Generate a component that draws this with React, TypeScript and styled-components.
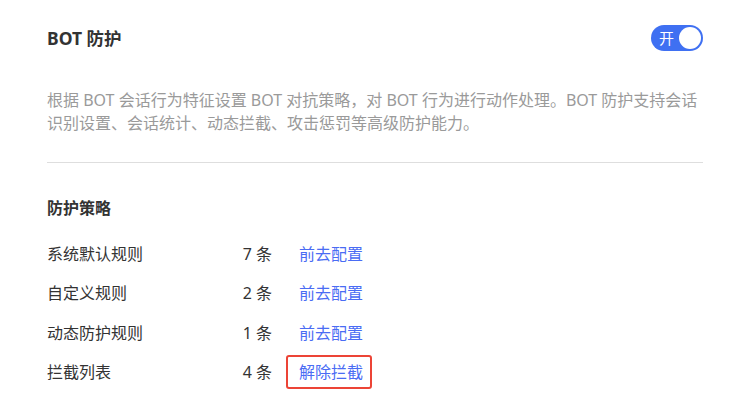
import React from "react";
import styled, { createGlobalStyle } from "styled-components";

const Global = createGlobalStyle`
  html, body { margin: 0; padding: 0; background: #ffffff; }
  body {
    font-family: "Noto Sans", "Noto Sans CJK SC", sans-serif;
    color: #333333;
  }
`;

const Page = styled.div`
  width: 749px;
  box-sizing: border-box;
  padding: 25px 46px 0 47px;
`;

const Header = styled.div`
  display: flex;
  align-items: center;
  justify-content: space-between;
  height: 26px;
`;

const Title = styled.h2`
  margin: 0;
  font-size: 17.5px;
  font-weight: 700;
  line-height: 24px;
  color: #333333;
`;

const Switch = styled.button`
  position: relative;
  display: flex;
  align-items: center;
  justify-content: space-between;
  width: 52px;
  height: 26px;
  padding: 0 2px 0 8px;
  box-sizing: border-box;
  border: none;
  border-radius: 13px;
  background: #3f70f2;
  cursor: pointer;
`;

const SwitchLabel = styled.span`
  font-family: "Noto Sans CJK SC", sans-serif;
  font-size: 15px;
  line-height: 26px;
  color: #ffffff;
`;

const Knob = styled.span`
  width: 22px;
  height: 22px;
  border-radius: 50%;
  background: #ffffff;
`;

const Description = styled.p`
  margin: 38px 0 0;
  font-size: 16px;
  line-height: 23px;
  color: #9a9a9a;
`;

const Divider = styled.hr`
  margin: 27px 0 0;
  border: none;
  height: 1px;
  background: #dedede;
`;

const SectionTitle = styled.h3`
  margin: 33px 0 0;
  font-size: 16px;
  font-weight: 700;
  line-height: 24px;
  color: #333333;
`;

const List = styled.div`
  margin-top: 14.5px;
  display: flex;
  flex-direction: column;
`;

const Row = styled.div`
  display: flex;
  align-items: center;
  height: 39.3px;
  font-size: 16px;
  line-height: 24px;
`;

const Label = styled.span`
  width: 180px;
  color: #333333;
`;

const Count = styled.span`
  width: 45px;
  text-align: right;
  color: #333333;
`;

const Action = styled.a<{ $highlight?: boolean }>`
  position: relative;
  margin-left: 27px;
  color: #4a6cf4;
  text-decoration: none;
  cursor: pointer;
  ${(p) =>
    p.$highlight &&
    `
    &::after {
      content: "";
      position: absolute;
      left: -13px;
      right: -9px;
      top: -5px;
      bottom: -5px;
      border: 2px solid #ec4436;
      border-radius: 3px;
      pointer-events: none;
    }
  `}
`;

const rules = [
  { label: "系统默认规则", count: 7, action: "前去配置" },
  { label: "自定义规则", count: 2, action: "前去配置" },
  { label: "动态防护规则", count: 1, action: "前去配置" },
  { label: "拦截列表", count: 4, action: "解除拦截", highlight: true },
];

export default function App() {
  return (
    <>
      <Global />
      <Page>
        <Header>
          <Title>BOT 防护</Title>
          <Switch aria-pressed="true">
            <SwitchLabel>开</SwitchLabel>
            <Knob />
          </Switch>
        </Header>
        <Description>
          根据 BOT 会话行为特征设置 BOT 对抗策略，对 BOT 行为进行动作处理。BOT 防护支持会话识别设置、会话统计、动态拦截、攻击惩罚等高级防护能力。
        </Description>
        <Divider />
        <SectionTitle>防护策略</SectionTitle>
        <List>
          {rules.map((r) => (
            <Row key={r.label}>
              <Label>{r.label}</Label>
              <Count>{r.count} 条</Count>
              <Action $highlight={r.highlight}>{r.action}</Action>
            </Row>
          ))}
        </List>
      </Page>
    </>
  );
}
